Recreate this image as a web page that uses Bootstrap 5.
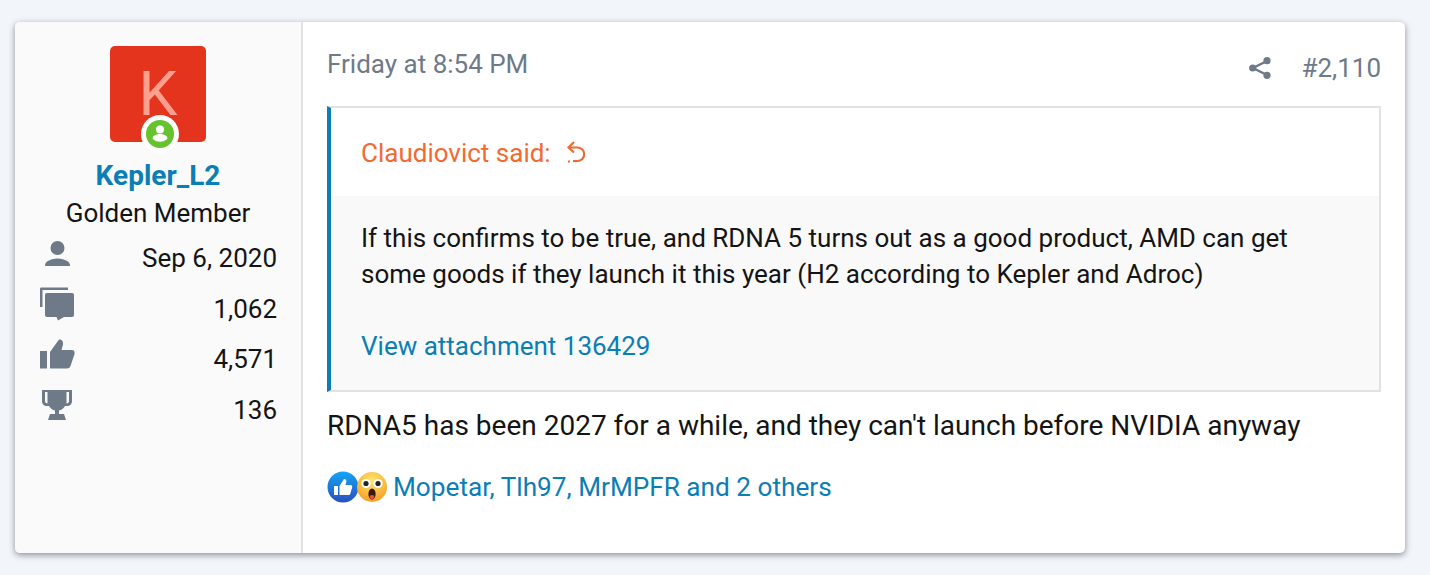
<!DOCTYPE html>
<html lang="en">
<head>
  <meta charset="UTF-8">
  <title>Post #2,110</title>
  <link href="https://cdn.jsdelivr.net/npm/bootstrap@5.3.3/dist/css/bootstrap.min.css" rel="stylesheet">
  <style>
    body { background: #f2f5f9; font-family: Roboto, "Liberation Sans", sans-serif; font-size: 26px; line-height: 36px; color: #141414; height: 575px; overflow: hidden; padding: 22px 25px 0 15px; }
    a { color: #0a7eb5; text-decoration: none; }
    .post-box { height: 531px; background: #fff; border-radius: 5px; box-shadow: 0 2px 6px rgba(50,60,70,.55); overflow: hidden; }
    .post-user { width: 288px; flex: none; background: #fafafa; border-right: 2px solid #e2e2e2; padding: 24px 24px 0 24px; }
    .avatar-wrap { width: 96px; height: 96px; position: relative; margin: 0 auto; }
    .avatar-box { width: 96px; height: 96px; background: #e5341e; color: #ffa08e; border-radius: 5px; font-size: 62px; line-height: 96px; text-align: center; }
    .online-dot { position: absolute; left: 31px; bottom: -11px; width: 38px; height: 38px; background: #fff; border-radius: 50%; padding: 5px; }
    .online-dot svg { display: block; width: 28px; height: 28px; }
    .user-name { font-size: 28px; font-weight: 700; color: #0a7eb5; margin-top: 16px; line-height: 36px; text-align: center; }
    .user-title { line-height: 36px; margin-top: 1px; text-align: center; }
    .stat-list { margin-top: 2px; }
    .stat-row { height: 50.5px; }
    .stat-row svg { display: block; flex: none; margin-bottom: 10px; }
    .stat-row .person-icon { margin-bottom: 7px; }
    .post-main { padding: 24px 24px 0 24px; min-width: 0; }
    .post-head { height: 60px; }
    .post-date, .post-num { color: #6e7a88; }
    .post-num { margin-top: 4px; height: 36px; gap: 30px; }
    .quote-box { border: 2px solid #e2e2e2; border-left: 4px solid #0a7eb5; }
    .quote-head { height: 88px; padding: 1px 30px 0; color: #f26a32; gap: 15px; }
    .quote-body { background: #f9f9f9; padding: 24px 30px 26px; height: 194px; }
    .post-text { font-size: 28px; margin-top: 16px; }
    .react-row { margin-top: 25px; gap: 5px; }
    .react-row a { font-size: 26.2px; }
    .react-icons svg { display: block; width: 32px; height: 32px; }
    .react-icons svg + svg { margin-left: -3px; }
  </style>
</head>
<body>
  <div class="post-box d-flex">
    <div class="post-user">
      <div class="avatar-wrap">
        <div class="avatar-box">K</div>
        <div class="online-dot">
          <svg viewBox="0 0 28 28"><circle cx="14" cy="14" r="14" fill="#66c22e"/><circle cx="14" cy="9.500" r="4" fill="#fff"/><path d="M6.500 18.500c0-3 4-4.500 7.500-4.500s7.500 1.500 7.500 4.500c-2 2.200-4.600 3.300-7.500 3.300s-5.500-1.100-7.500-3.300z" fill="#fff"/></svg>
        </div>
      </div>
      <div class="user-name">Kepler_L2</div>
      <div class="user-title">Golden Member</div>
      <div class="stat-list">
        <div class="stat-row d-flex justify-content-between align-items-center">
          <svg class="person-icon" width="36" height="30" viewBox="0 0 36 30" fill="#6e7a88"><circle cx="18.500" cy="8" r="7"/><path d="M6 26c0-1 0-3 2-4.500 3-2 7-3 10.500-3s7.500 1 10.500 3c2 1.500 2 3.500 2 4.500z"/></svg>
          <span>Sep 6, 2020</span>
        </div>
        <div class="stat-row d-flex justify-content-between align-items-center">
          <svg width="36" height="34" viewBox="0 0 36 34" fill="#6e7a88"><path d="M1 2c0-1 .5-1.500 1.500-1.500H29v2.500H3.500v17H1z"/><path d="M8 6h25a2 2 0 0 1 2 2v20a2 2 0 0 1-2 2H25l-6 3.500-1.500-3.500H8a2 2 0 0 1-2-2V8a2 2 0 0 1 2-2z"/></svg>
          <span>1,062</span>
        </div>
        <div class="stat-row d-flex justify-content-between align-items-center">
          <svg width="36" height="30" viewBox="0 0 36 30" fill="#6e7a88"><path d="M1 12h7v17.500H1z"/><path d="M11 29.500V13l9-12.500c3 0 4.500 2 4 5L22.500 11H33c2 0 3 2 2.500 4l-4 12c-.5 1.500-1.500 2.500-3.500 2.500z"/></svg>
          <span>4,571</span>
        </div>
        <div class="stat-row d-flex justify-content-between align-items-center">
          <svg width="36" height="32" viewBox="0 0 36 32" fill="#6e7a88"><path fill-rule="evenodd" d="M3 1h30v11c0 3-2 5-5 5h-2c-1.500 2.500-3.500 4-6 4.500V25h5l2 6H9l2-6h5v-3.500c-2.500-.5-4.500-2-6-4.500H8c-3 0-5-2-5-5zM6 3v9c0 1.500 1 2.500 2.500 2.500V3zm24 0h-2.500v11.500C29 14.500 30 13.500 30 12z"/></svg>
          <span>136</span>
        </div>
      </div>
    </div>
    <div class="post-main flex-grow-1">
      <div class="post-head d-flex justify-content-between">
        <a class="post-date" href="#">Friday at 8:54 PM</a>
        <div class="post-num d-flex align-items-center">
          <svg width="22" height="22" viewBox="0 0 22 22" fill="none"><path d="M18 4 4 11l14 7" stroke="#6e7a88" stroke-width="2.500"/><circle cx="18" cy="3.700" r="3.600" fill="#6e7a88"/><circle cx="3.700" cy="11" r="3.600" fill="#6e7a88"/><circle cx="18" cy="18.300" r="3.600" fill="#6e7a88"/></svg>
          <span>#2,110</span>
        </div>
      </div>
      <div class="quote-box">
        <div class="quote-head d-flex align-items-center">
          <span>Claudiovict said:</span>
          <svg width="20" height="23" viewBox="0 0 20 23" fill="none" stroke="#f26a32" stroke-width="2.200"><path d="M8 1 2.500 6.500 8 11.500"/><path d="M3 6.500h8.500a6.500 6.500 0 0 1 0 13.500H7"/><path d="M2 20.500h2"/></svg>
        </div>
        <div class="quote-body">
          If this confirms to be true, and RDNA 5 turns out as a good product, AMD can get some goods if they launch it this year (H2 according to Kepler and Adroc)<br><br>
          <a href="#">View attachment 136429</a>
        </div>
      </div>
      <div class="post-text">RDNA5 has been 2027 for a while, and they can't launch before NVIDIA anyway</div>
      <div class="react-row d-flex align-items-center">
        <div class="react-icons d-flex">
          <svg viewBox="0 0 32 32"><defs><linearGradient id="likeGrad" x1="0" y1="0" x2="0" y2="1"><stop offset="0" stop-color="#12a5f5"/><stop offset="1" stop-color="#2a4fc0"/></linearGradient></defs><circle cx="16" cy="16" r="15.500" fill="url(#likeGrad)"/><path d="M7 15h4v9H7zM12.500 24v-9l4.500-7c2 0 2.700 1.300 2.300 3l-.8 3h5c1.300 0 2 1 1.700 2.300l-1.800 6.200c-.3 1-1 1.500-2 1.500z" fill="#fff"/></svg>
          <svg viewBox="0 0 32 32"><defs><radialGradient id="wowGrad" cx=".5" cy=".3" r=".75"><stop offset="0" stop-color="#ffe870"/><stop offset="1" stop-color="#f59a1e"/></radialGradient></defs><circle cx="16" cy="16" r="15" fill="url(#wowGrad)"/><circle cx="10" cy="12.500" r="4.600" fill="#fff"/><circle cx="22" cy="12.500" r="4.600" fill="#fff"/><circle cx="10" cy="12.500" r="2.600" fill="#222"/><circle cx="22" cy="12.500" r="2.600" fill="#222"/><ellipse cx="16" cy="23" rx="3.600" ry="5.500" fill="#3a1a10"/><ellipse cx="16" cy="26" rx="2.400" ry="2" fill="#e8503a"/></svg>
        </div>
        <a href="#">Mopetar, Tlh97, MrMPFR and 2 others</a>
      </div>
    </div>
  </div>
  <script src="https://cdn.jsdelivr.net/npm/bootstrap@5.3.3/dist/js/bootstrap.bundle.min.js"></script>
</body>
</html>
